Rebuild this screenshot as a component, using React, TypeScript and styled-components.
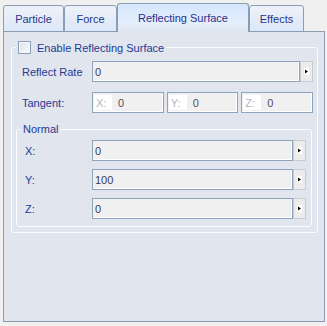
import React from 'react'
import styled, { createGlobalStyle } from 'styled-components'

const GlobalStyle = createGlobalStyle`
  html, body {
    margin: 0;
    padding: 0;
    background: #f0f0f0;
  }
  body {
    font-family: "Liberation Sans", Arial, sans-serif;
    font-size: 11px;
  }
`

const Frame = styled.div`
  width: 327px;
  height: 326px;
  box-sizing: border-box;
  padding: 3px 0 0 3px;
`

const TabStrip = styled.div`
  display: flex;
  align-items: flex-end;
  height: 29px;
  margin-bottom: -1px;
  position: relative;
  z-index: 1;
`

const Tab = styled.div<{ $w: number; $active?: boolean }>`
  box-sizing: border-box;
  width: ${(p) => p.$w}px;
  height: ${(p) => (p.$active ? 29 : 27)}px;
  display: flex;
  align-items: center;
  justify-content: center;
  padding-bottom: ${(p) => (p.$active ? 1 : 0)}px;
  border: 1px solid #8b9db3;
  border-bottom: ${(p) => (p.$active ? 'none' : '1px solid #8b9db3')};
  border-radius: 3px 3px 0 0;
  background: ${(p) =>
    p.$active
      ? 'linear-gradient(#d5e6fc, #e4eefc 70%, #e0e5ee)'
      : 'linear-gradient(#eef2f8, #dce7f8)'};
  color: ${(p) => (p.$active ? '#2b2f8c' : '#22388c')};
`

const Panel = styled.div`
  box-sizing: border-box;
  width: 322px;
  height: 291px;
  border: 1px solid #8b9db3;
  background: #e0e5ee;
  padding: 9px 6px 0 7px;
`

const Group = styled.fieldset`
  margin: 0;
  border: 1px solid #fbfcfd;
  border-radius: 3px;
  padding: 7px 4px 5px 4px;
  display: flex;
  flex-direction: column;
  gap: 10px;
`

const Legend = styled.legend`
  display: flex;
  align-items: center;
  gap: 6px;
  height: 13px;
  padding: 0 2px;
  margin-left: 0px;
  color: #1f3a93;
`

const CheckBox = styled.span`
  box-sizing: border-box;
  width: 13px;
  height: 13px;
  border: 1px solid #8ea0b8;
  background: linear-gradient(135deg, #dfe3e8, #fafbfc);
  box-shadow: inset 0 0 0 1px #f4f6f8;
`

const Row = styled.div`
  display: flex;
  align-items: center;
  padding-left: 6px;
`

const Label = styled.span<{ $w: number }>`
  width: ${(p) => p.$w}px;
  flex: none;
  color: #1f3a93;
`

const Field = styled.div`
  flex: 1;
  box-sizing: border-box;
  height: 21px;
  display: flex;
  align-items: center;
  padding-left: 2px;
  border: 1px solid #8ea4bd;
  box-shadow: inset -1px -1px 0 #ffffff;
  background: #f0f0f0;
  color: #3c3c58;
`

const Spin = styled.div`
  box-sizing: border-box;
  width: 13px;
  height: 21px;
  flex: none;
  display: flex;
  align-items: center;
  justify-content: center;
  border: 1px solid #c8cbd0;
  background: #ececec;
`

const Vector = styled.div`
  flex: 1;
  display: grid;
  grid-template-columns: repeat(3, 1fr);
  gap: 3px;
`

const Cell = styled.div`
  box-sizing: border-box;
  height: 21px;
  display: flex;
  align-items: center;
  padding: 1px;
  border: 1px solid #8ea4bd;
  box-shadow: inset -1px -1px 0 #ffffff;
  background: #f0f0f0;
  color: #5a4a5e;
`

const Axis = styled.span`
  width: 18px;
  height: 15px;
  display: flex;
  align-items: center;
  padding-left: 2px;
  box-sizing: border-box;
  background: #ffffff;
  color: #b4b4bc;
  margin-right: 6px;
`

const SubGroup = styled.fieldset`
  margin: 0 1px 0 0;
  border: 1px solid #fbfcfd;
  border-radius: 3px;
  padding: 4px 5px 7px 8px;
  display: flex;
  flex-direction: column;
  gap: 8px;
`

const SubLegend = styled.legend`
  height: 13px;
  line-height: 13px;
  padding: 0 2px;
  margin-left: -4px;
  color: #1f3a93;
`

const SubRow = styled.div`
  display: flex;
  align-items: center;
`

function Arrow() {
  return (
    <svg width="5" height="7" viewBox="0 0 5 7">
      <rect width="5" height="7" fill="#ffffff" />
      <path d="M1 1.5 L4 3.5 L1 5.5 Z" fill="#000000" />
    </svg>
  )
}

const tabs = [
  { name: 'Particle', w: 61 },
  { name: 'Force', w: 53 },
  { name: 'Reflecting Surface', w: 132, active: true },
  { name: 'Effects', w: 55 },
]

const normal = [
  { axis: 'X:', value: '0' },
  { axis: 'Y:', value: '100' },
  { axis: 'Z:', value: '0' },
]

export default function App() {
  return (
    <>
      <GlobalStyle />
      <Frame>
        <TabStrip>
          {tabs.map((t) => (
            <Tab key={t.name} $w={t.w} $active={t.active}>
              {t.name}
            </Tab>
          ))}
        </TabStrip>
        <Panel>
          <Group>
            <Legend>
              <CheckBox />
              Enable Reflecting Surface
            </Legend>
            <Row>
              <Label $w={70}>Reflect Rate</Label>
              <Field>0</Field>
              <Spin>
                <Arrow />
              </Spin>
            </Row>
            <Row>
              <Label $w={70}>Tangent:</Label>
              <Vector>
                {['X:', 'Y:', 'Z:'].map((a) => (
                  <Cell key={a}>
                    <Axis>{a}</Axis>0
                  </Cell>
                ))}
              </Vector>
            </Row>
            <SubGroup>
              <SubLegend>Normal</SubLegend>
              {normal.map((n) => (
                <SubRow key={n.axis}>
                  <Label $w={67}>{n.axis}</Label>
                  <Field>{n.value}</Field>
                  <Spin>
                    <Arrow />
                  </Spin>
                </SubRow>
              ))}
            </SubGroup>
          </Group>
        </Panel>
      </Frame>
    </>
  )
}
